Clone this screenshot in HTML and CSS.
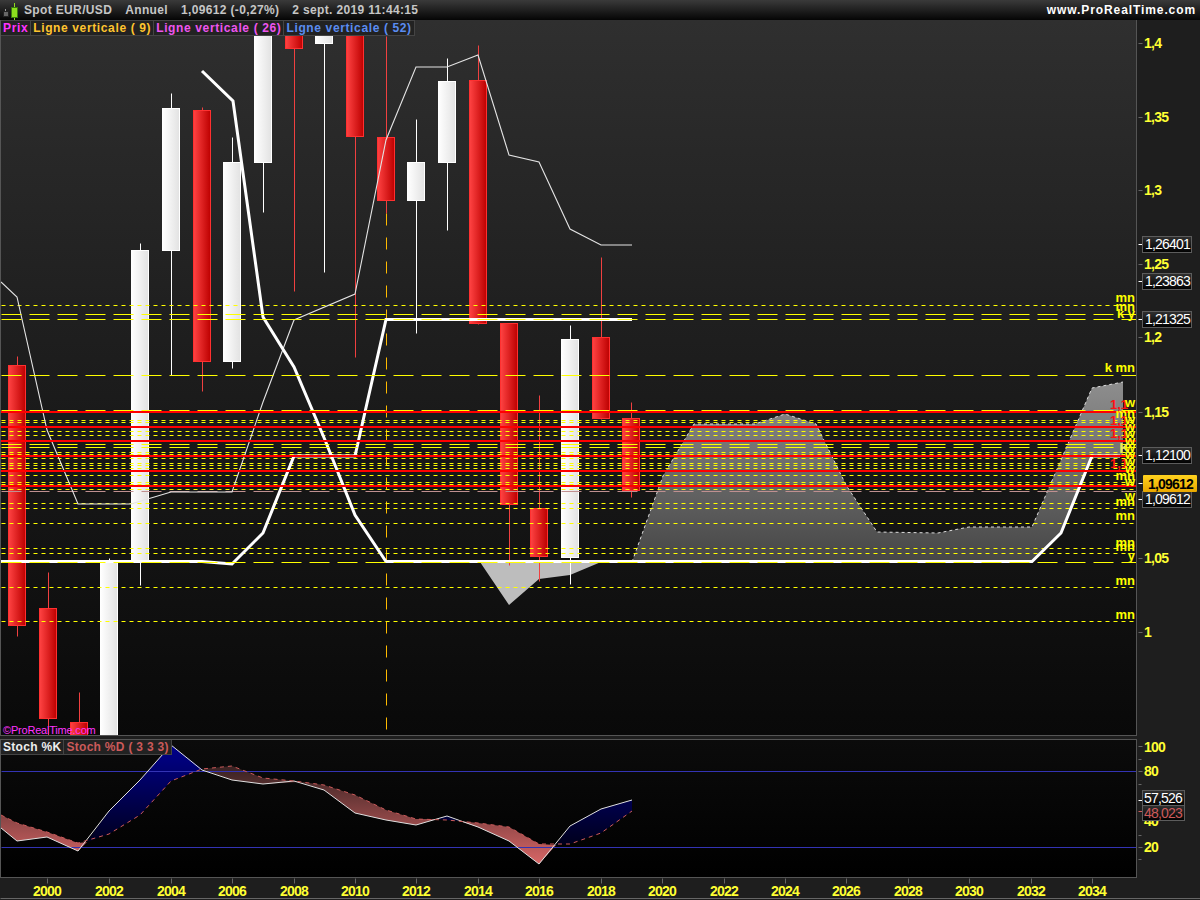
FILE: index.html
```html
<!DOCTYPE html>
<html>

<head>
  <meta charset="UTF-8">
  <title>Spot EUR/USD</title>
  <link rel="stylesheet" href="styles.css">
</head>

<body>
  <div class="titlebar">
    <svg class="logo" width="22" height="20" viewBox="0 0 22 20">
      <rect x="3.5" y="11.5" width="5" height="5" fill="#666" stroke="#222" />
      <path d="M5.5 9V11" stroke="#999" />
      <rect x="11.5" y="7.5" width="6" height="10" fill="#8ede1e" stroke="#3c7a10" />
      <path d="M14.5 3V7M14.5 18V20" stroke="#8ede1e" />
    </svg>
    <span class="title-info">Spot EUR/USD</span>
    <span class="title-info">Annuel</span>
    <span class="title-info">1,09612 (-0,27%)</span>
    <span class="title-info">2 sept. 2019 11:44:15</span>
    <span class="site">www.ProRealTime.com</span>
  </div>

  <div class="pane price-pane">
    <div class="plot">
      <div class="legend">
        <span class="legend-item c-magenta">Prix</span>
        <span class="legend-item c-orange">Ligne verticale ( 9)</span>
        <span class="legend-item c-pink">Ligne verticale ( 26)</span>
        <span class="legend-item c-blue">Ligne verticale ( 52)</span>
      </div>
      <svg class="chart" width="1136" height="716" viewBox="1 20 1136 716">
        <defs>
          <linearGradient id="redBody">
            <stop offset="0" stop-color="#ff4343" />
            <stop offset="1" stop-color="#bd0000" />
          </linearGradient>
          <linearGradient id="whiteBody">
            <stop offset="0" stop-color="#ffffff" />
            <stop offset="1" stop-color="#e2e2e2" />
          </linearGradient>
          <linearGradient id="cloudUp" gradientUnits="userSpaceOnUse" x1="0" y1="382" x2="0" y2="562">
            <stop offset="0" stop-color="#8e8e8e" />
            <stop offset="1" stop-color="#464646" />
          </linearGradient>
        </defs>

        <!-- cloud -->
        <path d="M632 562L663 476L694 424L755 424L785 414L816 424L846 485L877 532L938 533L969 527L1032 527L1061 460L1092 388L1123 382V456H1092L1061 533L1032 562Z" fill="url(#cloudUp)" />
        <path class="cloud-edge" d="M632 562L663 476L694 424L755 424L785 414L816 424L846 485L877 532L938 533L969 527L1032 527L1061 460L1092 388L1123 382" />
        <path d="M480 562L509 605L539 579L570 575L601 562Z" fill="#bdbdbd" />

        <!-- wicks -->
        <path class="px wick-red" d="M17 356V636M48 572V736M79 692V736M202 107V391M294 36V291M355 36V357M386 36V213M478 45V324M509 323V565M539 395V581M601 257V419M631 402V497" />
        <path class="px wick-white" d="M109 558V736M140 243V585M171 93V375M232 137V368M263 36V212M324 36V272M416 119V333M447 58V230M570 325V584" />

        <!-- candles -->
        <g fill="url(#redBody)" stroke="#ff3030">
          <rect x="8.5" y="365.5" width="17" height="260" />
          <rect x="39.5" y="608.5" width="17" height="110" />
          <rect x="70.5" y="722.5" width="17" height="20" />
          <rect x="193.5" y="110.5" width="17" height="251" />
          <rect x="285.5" y="30.5" width="17" height="18" />
          <rect x="346.5" y="30.5" width="17" height="106" />
          <rect x="377.5" y="137.5" width="17" height="63" />
          <rect x="469.5" y="80.5" width="17" height="243" />
          <rect x="500.5" y="323.5" width="17" height="181" />
          <rect x="530.5" y="508.5" width="17" height="48" />
          <rect x="592.5" y="337.5" width="17" height="81" />
          <rect x="622.5" y="418.5" width="17" height="72" />
        </g>
        <g fill="url(#whiteBody)" stroke="#fff">
          <rect x="100.5" y="562.5" width="17" height="180" />
          <rect x="131.5" y="250.5" width="17" height="310" />
          <rect x="162.5" y="108.5" width="17" height="142" />
          <rect x="223.5" y="162.5" width="17" height="199" />
          <rect x="254.5" y="30.5" width="17" height="132" />
          <rect x="315.5" y="30.5" width="17" height="13" />
          <rect x="407.5" y="162.5" width="17" height="38" />
          <rect x="438.5" y="81.5" width="17" height="81" />
          <rect x="561.5" y="339.5" width="17" height="218" />
        </g>

        <!-- orange vertical -->
        <path class="px v-orange" d="M386 213V730" />

        <!-- short dashed levels -->
        <path class="px level-short" d="M1 305H1137M1 420H1137M1 422H1137M1 431H1137M1 435H1137M1 452H1137M1 454H1137M1 458H1137M1 463H1137M1 465H1137M1 468H1137M1 475H1137M1 482H1137M1 484H1137M1 489H1137M1 503H1137M1 508H1137M1 523H1137M1 548H1137M1 553H1137M1 587H1137M1 621H1137" />
        <path class="px level-pink" d="M1 491H1137" />

        <!-- moving averages -->
        <path class="ma-thin" d="M1 282L17 297L47 430L78 504H131L171 492H232L263 402L294 320L355 294L386 140L416 67H447L478 55L509 155L539 162L570 229L601 245H632" />
        <path class="ma-thick" d="M202 71L233 101L263 317L294 367L325 440L355 515L386 561.5H1032L1061 533L1092 456H1120" />
        <path class="ma-thick" d="M1 561.5H202L232 564L263 533L294 456H355L386 319.5H632" />

        <!-- long dashed levels -->
        <path class="px level-long" d="M1 314H1137M1 319H1137M1 375H1137M1 410H1137M1 444H1137M1 447H1137M1 470H1137M1 562H1137" />

        <!-- red levels -->
        <path class="level-red" d="M1 412H1137M1 427H1137M1 441H1137M1 456H1137M1 471H1137M1 486H1137" />

        <!-- level labels -->
        <g class="marks">
          <text x="1135" y="302">mn</text>
          <text x="1135" y="311">mn</text>
          <text x="1135" y="318">k y</text>
          <text x="1135" y="372">k mn</text>
          <text class="mark-red" x="1128" y="409">1,1</text>
          <text x="1135" y="407">w</text>
          <text x="1135" y="418">mn</text>
          <text class="mark-red" x="1128" y="425">1,1</text>
          <text x="1135" y="424">w</text>
          <text x="1135" y="431">w</text>
          <text class="mark-red" x="1128" y="438">1,1</text>
          <text x="1135" y="438">w</text>
          <text x="1135" y="445">w</text>
          <text class="mark-pale" x="1130" y="453">K</text>
          <text x="1135" y="452">w</text>
          <text x="1135" y="459">w</text>
          <text class="mark-red" x="1128" y="468">1,1</text>
          <text x="1135" y="466">w</text>
          <text x="1135" y="473">w</text>
          <text x="1135" y="480">mn</text>
          <text x="1135" y="486">w</text>
          <text x="1135" y="500">w</text>
          <text x="1135" y="506">mn</text>
          <text x="1135" y="520">mn</text>
          <text x="1135" y="547">mn</text>
          <text x="1135" y="551">mn</text>
          <text x="1135" y="560">y</text>
          <text x="1135" y="585">mn</text>
          <text x="1135" y="619">mn</text>
        </g>

        <text class="watermark" x="3" y="734">©ProRealTime.com</text>
      </svg>
    </div>
    <svg class="axis" width="63" height="716" viewBox="1137 20 63 716">
      <defs>
        <linearGradient id="badgeDark" x1="0" y1="0" x2="0" y2="1">
          <stop offset="0" stop-color="#303030" />
          <stop offset="1" stop-color="#000" />
        </linearGradient>
        <linearGradient id="badgeGold" x1="0" y1="0" x2="0" y2="1">
          <stop offset="0" stop-color="#ffd21e" />
          <stop offset="1" stop-color="#eaa800" />
        </linearGradient>
      </defs>
      <path class="px tick" d="M1138 43H1142M1138 117H1142M1138 190H1142M1138 264H1142M1138 337H1142M1138 412H1142M1138 558H1142M1138 632H1142" />
      <path class="px tick-white" d="M1138 244H1142M1138 281H1142M1138 319H1142M1138 455H1142M1138 483H1142M1138 499H1142" />
      <g class="axis-labels">
        <text x="1144" y="48">1,4</text>
        <text x="1144" y="122">1,35</text>
        <text x="1144" y="195">1,3</text>
        <text x="1144" y="269">1,25</text>
        <text x="1144" y="342">1,2</text>
        <text x="1144" y="417">1,15</text>
        <text x="1144" y="563">1,05</text>
        <text x="1144" y="637">1</text>
      </g>
      <g class="badge">
        <rect x="1142.5" y="236.5" width="49" height="16" fill="url(#badgeDark)" />
        <text x="1145" y="249">1,26401</text>
        <rect x="1142.5" y="273.5" width="49" height="16" fill="url(#badgeDark)" />
        <text x="1145" y="286">1,23863</text>
        <rect x="1142.5" y="311.5" width="49" height="16" fill="url(#badgeDark)" />
        <text x="1145" y="324">1,21325</text>
        <rect x="1142.5" y="447.5" width="49" height="16" fill="url(#badgeDark)" />
        <text x="1145" y="460">1,12100</text>
        <rect x="1142.5" y="491.5" width="49" height="16" fill="url(#badgeDark)" />
        <text x="1145" y="504">1,09612</text>
      </g>
      <g class="badge badge-last">
        <rect x="1143" y="475" width="54" height="17" rx="1" fill="url(#badgeGold)" />
        <text x="1148" y="489">1,09612</text>
      </g>
    </svg>
  </div>

  <div class="pane stoch-pane">
    <div class="plot">
      <div class="legend">
        <span class="legend-item c-white">Stoch %K</span>
        <span class="legend-item c-rose">Stoch %D ( 3 3 3)</span>
      </div>
      <svg class="chart" width="1136" height="139" viewBox="1 739 1136 139">
        <defs>
          <linearGradient id="stochRed" gradientUnits="userSpaceOnUse" x1="0" y1="770" x2="0" y2="864">
            <stop offset="0" stop-color="#3d2424" />
            <stop offset="1" stop-color="#d86666" />
          </linearGradient>
          <linearGradient id="stochBlue" gradientUnits="userSpaceOnUse" x1="0" y1="745" x2="0" y2="845">
            <stop offset="0" stop-color="#00008c" />
            <stop offset="1" stop-color="#00001c" />
          </linearGradient>
        </defs>
        <path d="M1 815L17 823L47 832L78 843L87 842L78 851L47 837L17 841L1 828Z" fill="url(#stochRed)" />
        <path d="M87 842L109 811L140 780L171 745L202 769L171 781L140 815L109 834Z" fill="url(#stochBlue)" />
        <path d="M202 769L232 766L263 778L294 781L324 785L355 795L386 810L416 819L437 819L416 825L386 820L355 813L324 790L300 782L263 784L232 780Z" fill="url(#stochRed)" />
        <path d="M437 819L447 816L459 821L447 820Z" fill="url(#stochBlue)" />
        <path d="M459 821L478 823L509 827L539 844L556 845L539 864L509 841L478 827Z" fill="url(#stochRed)" />
        <path d="M556 845L570 844L601 833L632 811V800L601 809L570 826Z" fill="url(#stochBlue)" />
        <path class="px grid-blue" d="M1 771H1137M1 847H1137" />
        <path class="stoch-k" d="M1 828L17 841L47 837L78 851L109 811L140 780L171 745L202 770L232 780L263 784L294 781L324 790L355 813L386 820L416 825L447 816L478 827L509 841L539 864L570 826L601 809L632 800" />
        <path class="stoch-d" d="M1 815L17 823L47 832L78 843L109 834L140 815L171 781L202 769L232 766L263 778L294 781L324 785L355 795L386 810L416 819L447 820L478 823L509 827L539 844L570 844L601 833L632 811" />
      </svg>
    </div>
    <svg class="axis" width="63" height="139" viewBox="1137 739 63 139">
      <path class="px tick" d="M1138 746H1142M1138 759H1141M1138 771H1142M1138 784H1141M1138 835H1141M1138 847H1142M1138 859H1141" />
      <path class="px tick-white" d="M1138 800H1142" />
      <path class="px tick-rose" d="M1138 811H1142" />
      <g class="axis-labels">
        <text x="1144" y="752">100</text>
        <text x="1144" y="776">80</text>
        <text x="1144" y="826">40</text>
        <text x="1144" y="852">20</text>
      </g>
      <g class="badge">
        <rect x="1142.5" y="790.5" width="42" height="15" fill="url(#badgeDark)" />
        <text x="1144" y="803">57,526</text>
        <rect x="1142.5" y="805.5" width="42" height="15" fill="url(#badgeDark)" />
        <text class="badge-rose" x="1144" y="818">48,023</text>
      </g>
    </svg>
  </div>

  <svg class="time-axis" width="1200" height="22" viewBox="0 878 1200 22">
    <path class="px tick" d="M47 878V883M109 878V883M171 878V883M232 878V883M294 878V883M355 878V883M416 878V883M478 878V883M539 878V883M601 878V883M662 878V883M724 878V883M785 878V883M846 878V883M908 878V883M969 878V883M1031 878V883M1092 878V883M0 898H1200" />
    <g class="years">
      <text x="47" y="896">2000</text>
      <text x="109" y="896">2002</text>
      <text x="171" y="896">2004</text>
      <text x="232" y="896">2006</text>
      <text x="294" y="896">2008</text>
      <text x="355" y="896">2010</text>
      <text x="416" y="896">2012</text>
      <text x="478" y="896">2014</text>
      <text x="539" y="896">2016</text>
      <text x="601" y="896">2018</text>
      <text x="662" y="896">2020</text>
      <text x="724" y="896">2022</text>
      <text x="785" y="896">2024</text>
      <text x="846" y="896">2026</text>
      <text x="908" y="896">2028</text>
      <text x="969" y="896">2030</text>
      <text x="1031" y="896">2032</text>
      <text x="1092" y="896">2034</text>
    </g>
  </svg>
</body>

</html>
```

FILE: styles.css
```css
* {
  margin: 0;
  padding: 0;
  box-sizing: border-box;
}

body {
  width: 1200px;
  height: 900px;
  overflow: hidden;
  background: #1e1e1e;
  font-family: "Liberation Sans", Arial, sans-serif;
}

svg {
  display: block;
}

/* top bar */
.titlebar {
  height: 20px;
  display: flex;
  align-items: center;
  gap: 13px;
  padding-right: 4px;
  background: linear-gradient(#3a3a3a, #050505);
  color: #c6c6c6;
  font-size: 12px;
  font-weight: bold;
}

.logo {
  margin-right: -11px;
}

.title-info {
  letter-spacing: 0.35px;
}

.site {
  margin-left: auto;
  color: #fff;
  letter-spacing: 0.9px;
}

/* panes */
.pane {
  display: flex;
}

.price-pane {
  height: 716px;
}

.stoch-pane {
  height: 139px;
  margin-top: 3px;
}

.plot {
  position: relative;
  width: 1137px;
  overflow: hidden;
  border-left: 1px solid #555;
  border-right: 1px solid #555;
}

.price-pane .plot {
  border-bottom: 1px solid #555;
  background: linear-gradient(#2f2f2f, #090909);
}

.stoch-pane .plot {
  border-top: 1px solid #555;
  border-bottom: 1px solid #555;
  background: linear-gradient(#0b0b0b, #000);
}

.stoch-pane .chart {
  margin-top: -1px;
}

/* legends over the charts */
.legend {
  position: absolute;
  top: 0;
  left: 0;
  z-index: 2;
  display: flex;
  font-size: 12px;
  font-weight: bold;
  letter-spacing: 0.63px;
}

.stoch-pane .legend {
  top: -1px;
  letter-spacing: 0.3px;
}

.legend-item {
  height: 16px;
  line-height: 15px;
  padding: 0 2px;
  background: #222;
  border: 1px solid #444;
  border-left: none;
  white-space: pre;
}

.c-magenta { color: #ff33ff; }
.c-orange { color: #ffc42e; }
.c-pink { color: #ee55ee; }
.c-blue { color: #5a8cf0; }
.c-white { color: #eee; }
.c-rose { color: #cc5a5a; }

/* whole-pixel strokes */
.px {
  transform: translate(0.5px, 0.5px);
}

/* price chart strokes */
.wick-red {
  fill: none;
  stroke: #f04040;
}

.wick-white {
  fill: none;
  stroke: #fff;
}

.v-orange {
  fill: none;
  stroke: #ffbb00;
  stroke-dasharray: 12 12;
}

.level-short {
  fill: none;
  stroke: #ffff00;
  stroke-dasharray: 4 4;
}

.level-long {
  fill: none;
  stroke: #ffff00;
  stroke-dasharray: 20 8;
}

.level-pink {
  fill: none;
  stroke: #c09090;
  stroke-dasharray: 20 8;
}

.level-red {
  fill: none;
  stroke: #ff0000;
  stroke-width: 2;
}

.ma-thin {
  fill: none;
  stroke: #e4e4e4;
  stroke-width: 1.1;
}

.ma-thick {
  fill: none;
  stroke: #fff;
  stroke-width: 3;
}

.cloud-edge {
  fill: none;
  stroke: #ddd;
  stroke-dasharray: 3 3;
}

.marks text {
  font-size: 13px;
  font-weight: bold;
  fill: #ffff00;
  text-anchor: end;
}

.marks .mark-red {
  fill: #ff1010;
}

.marks .mark-pale {
  fill: #e8e860;
  font-size: 15px;
}

.watermark {
  font-size: 11px;
  letter-spacing: -0.2px;
  fill: #ff33ff;
}

/* stochastic */
.grid-blue {
  fill: none;
  stroke: #3333b4;
}

.stoch-k {
  fill: none;
  stroke: #e0e0e0;
}

.stoch-d {
  fill: none;
  stroke: #cc5a5a;
  stroke-dasharray: 4 4;
}

/* axes */
.tick {
  fill: none;
  stroke: #666;
}

.tick-white {
  fill: none;
  stroke: #fff;
}

.tick-rose {
  fill: none;
  stroke: #cc5a5a;
}

.axis-labels text,
.years text {
  font-size: 14px;
  font-weight: bold;
  letter-spacing: -0.75px;
  fill: #ffff33;
}

.years text {
  text-anchor: middle;
}

.badge rect {
  stroke: #5c5c5c;
}

.badge text {
  font-size: 14px;
  letter-spacing: -0.8px;
  fill: #fff;
}

.badge .badge-rose {
  fill: #cc5a5a;
}

.badge-last rect {
  stroke: none;
}

.badge-last text {
  fill: #000;
  font-weight: bold;
}
```
